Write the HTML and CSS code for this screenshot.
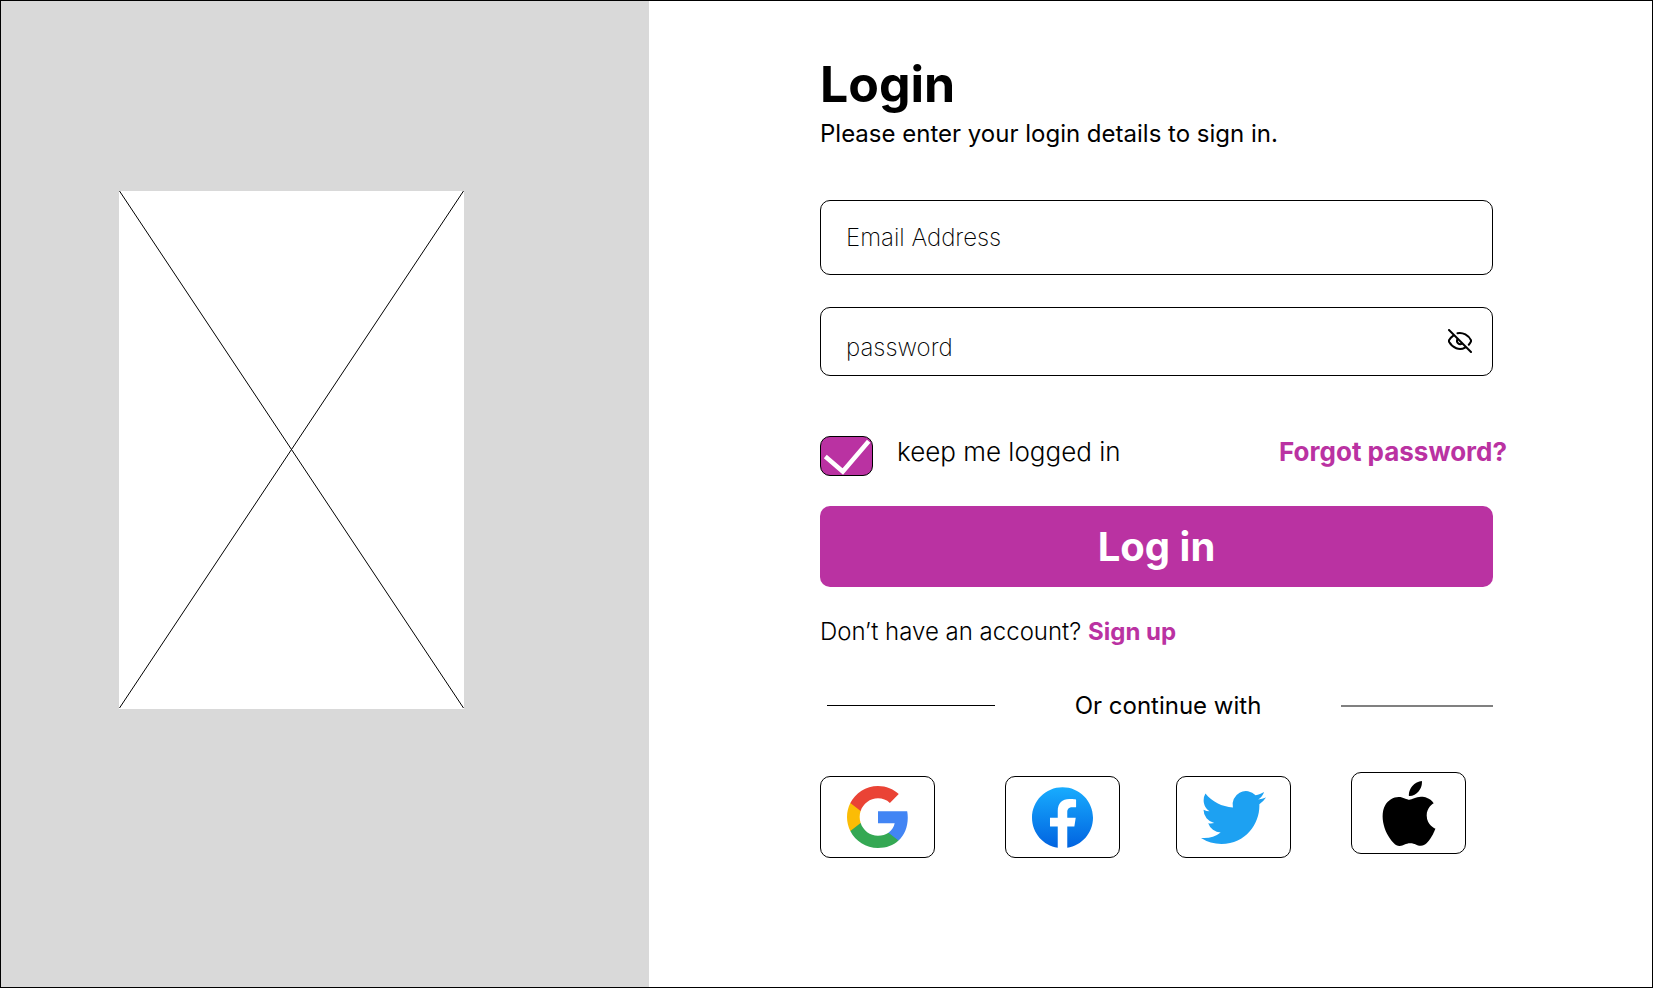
FILE: index.html
```html
<!DOCTYPE html>
<html lang="en">
<head>
<meta charset="utf-8">
<meta name="viewport" content="width=device-width, initial-scale=1">
<title>Login</title>
<link rel="stylesheet" href="styles.css">
</head>
<body>
<div class="page">
  <aside class="aside">
    <svg class="placeholder" viewBox="0 0 345 518" preserveAspectRatio="none" role="img" aria-label="Image placeholder">
      <rect width="345" height="518" fill="#fff"/>
      <path d="M.5 0 344.5 517M344.5 0 .5 517" stroke="#000" fill="none"/>
    </svg>
  </aside>
  <main class="main">
    <form class="form">
      <h1 class="title">Login</h1>
      <p class="subtitle">Please enter your login details to sign in.</p>
      <input class="field field-email" type="email" placeholder="Email Address" aria-label="Email Address">
      <div class="password">
        <input class="field field-password" type="password" placeholder="password" aria-label="password">
        <button class="reveal" type="button" aria-label="Show password">
          <svg viewBox="0 0 24 24" width="24" height="24" fill="none" stroke="#000" stroke-width="2" stroke-linecap="round" stroke-linejoin="round">
            <path d="M1 1 23 23"/>
            <path d="M9.5 4.2C15 3 20.500 6.500 23 11.200Q23.300 12 22.700 13 21.900 14.500 20.800 15.700"/>
            <path d="M5.300 6.600Q2.500 8.500 1 11.200.7 12 1.200 13C4.500 19 11.500 21.800 17 18.600"/>
            <path d="M9.300 10.300C8 13.500 11 16.200 14 14.700"/>
          </svg>
        </button>
      </div>
      <div class="options">
        <label class="keep">
          <span class="check">
            <input class="check-box" type="checkbox" checked>
            <svg class="check-mark" viewBox="0 0 53 40" aria-hidden="true"><path d="M5.300 20.500 22.800 35.500 48.700 5.300" fill="none" stroke="#fff" stroke-width="4.500"/></svg>
          </span>
          <span>keep me logged in</span>
        </label>
        <a class="link" href="#forgot">Forgot password?</a>
      </div>
      <button class="submit" type="submit">Log in</button>
      <p class="signup">Don’t have an account? <a class="link" href="#signup">Sign up</a></p>
      <div class="divider">
        <span class="rule"></span>
        <span class="divider-text">Or continue with</span>
        <span class="rule rule-gray"></span>
      </div>
      <div class="socials">
        <button class="social" type="button" aria-label="Google">
          <svg width="62" height="62" viewBox="1 1 22 22">
            <path fill="#4285F4" d="M22.560 12.250c0-.78-.07-1.530-.2-2.250H12v4.260h5.920c-.26 1.370-1.040 2.530-2.210 3.310v2.770h3.570c2.080-1.920 3.280-4.740 3.280-8.090z"/>
            <path fill="#34A853" d="M12 23c2.970 0 5.460-.98 7.280-2.660l-3.570-2.770c-.98.66-2.230 1.060-3.710 1.060-2.860 0-5.290-1.930-6.160-4.530H2.180v2.840C3.990 20.530 7.700 23 12 23z"/>
            <path fill="#FBBC05" d="M5.840 14.090c-.22-.66-.35-1.360-.35-2.090s.13-1.430.35-2.090V7.070H2.180C1.430 8.550 1 10.220 1 12s.43 3.450 1.180 4.930l3.660-2.840z"/>
            <path fill="#EA4335" d="M12 5.380c1.620 0 3.060.56 4.210 1.640l3.150-3.150C17.450 2.090 14.970 1 12 1 7.700 1 3.990 3.470 2.180 7.070l3.660 2.840c.87-2.600 3.300-4.530 6.160-4.530z"/>
          </svg>
        </button>
        <button class="social" type="button" aria-label="Facebook">
          <svg width="61" height="61" viewBox="0 0 24 24">
            <defs><linearGradient id="fb" x1="0" y1="0" x2="0" y2="1"><stop offset="0" stop-color="#18ACFE"/><stop offset="1" stop-color="#0163E0"/></linearGradient></defs>
            <path fill="url(#fb)" d="M24 12.073c0-6.627-5.373-12-12-12s-12 5.373-12 12c0 5.990 4.388 10.954 10.125 11.854v-8.385H7.078v-3.470h3.047V9.430c0-3.007 1.792-4.669 4.533-4.669 1.312 0 2.686.235 2.686.235v2.953H15.830c-1.491 0-1.956.925-1.956 1.874v2.250h3.328l-.532 3.470h-2.796v8.385C19.612 23.027 24 18.062 24 12.073z"/>
          </svg>
        </button>
        <button class="social" type="button" aria-label="Twitter">
          <svg width="65" height="65" viewBox="0 0 24 24">
            <path fill="#1DA1F2" d="M23.953 4.570a10 10 0 01-2.825.775 4.958 4.958 0 002.163-2.723c-.951.555-2.005.959-3.127 1.184a4.920 4.920 0 00-8.384 4.482C7.690 8.095 4.067 6.130 1.640 3.162a4.822 4.822 0 00-.666 2.475c0 1.710.87 3.213 2.188 4.096a4.904 4.904 0 01-2.228-.616v.06a4.923 4.923 0 003.946 4.827 4.996 4.996 0 01-2.212.085 4.936 4.936 0 004.604 3.417 9.867 9.867 0 01-6.102 2.105c-.39 0-.779-.023-1.170-.067a13.995 13.995 0 007.557 2.209c9.053 0 13.998-7.496 13.998-13.985 0-.21 0-.42-.015-.63A9.935 9.935 0 0024 4.590z"/>
          </svg>
        </button>
        <button class="social social-apple" type="button" aria-label="Apple">
          <svg width="54" height="65" viewBox="2 0 20 24">
            <path d="M12.152 6.896c-.948 0-2.415-1.078-3.960-1.040-2.040.027-3.910 1.183-4.961 3.014-2.117 3.675-.546 9.103 1.519 12.090 1.013 1.454 2.208 3.090 3.792 3.039 1.520-.065 2.090-.987 3.935-.987 1.831 0 2.350.987 3.960.948 1.637-.026 2.676-1.480 3.676-2.948 1.156-1.688 1.636-3.325 1.662-3.415-.039-.013-3.182-1.221-3.220-4.857-.026-3.040 2.480-4.494 2.597-4.559-1.429-2.090-3.623-2.324-4.390-2.376-2-.156-3.675 1.090-4.610 1.090zM15.530 3.830c.843-1.012 1.400-2.427 1.245-3.830-1.207.052-2.662.805-3.532 1.818-.78.896-1.454 2.338-1.273 3.714 1.338.104 2.715-.688 3.559-1.701"/>
          </svg>
        </button>
      </div>
    </form>
  </main>
</div>
</body>
</html>
```
FILE: styles.css
```css
*, *::before, *::after { box-sizing: border-box; }

body {
  margin: 0;
  background: #fff;
  color: #000;
  font-family: Inter, "Liberation Sans", sans-serif;
  font-size: 24px;
  line-height: 29px;
}

button, input { font: inherit; color: inherit; }
button { cursor: pointer; padding: 0; }
svg { display: block; }

.page {
  display: grid;
  grid-template-columns: 648fr 1003fr;
  min-height: 100vh;
  border: 1px solid #000;
}

.aside {
  display: grid;
  grid-template-columns: 118fr 345fr 185fr;
  align-items: start;
  padding-top: 190px;
  background: #d9d9d9;
}

.placeholder {
  grid-column: 2;
  width: 100%;
  aspect-ratio: 345 / 518;
}

.main {
  display: grid;
  grid-template-columns: 171fr 673fr 159fr;
  align-items: start;
  padding: 53px 0;
}

.form {
  grid-column: 2;
  display: flex;
  flex-direction: column;
}

.title {
  margin: 0 0 5px;
  font-size: 50px;
  line-height: 60px;
  font-weight: 700;
}

.subtitle { margin: 0 0 52px; }

.field {
  display: block;
  width: 100%;
  padding: 0 25px;
  border: 1px solid #000;
  border-radius: 10px;
  background: #fff;
  font-weight: 200;
}

.field::placeholder { color: #000; opacity: 1; }

.field-email { height: 75px; }

.password {
  position: relative;
  margin: 32px 0 60px;
}

.field-password {
  height: 69px;
  padding: 12px 60px 0 25px;
}

.reveal {
  position: absolute;
  top: 22px;
  right: 21px;
  border: 0;
  background: none;
}

.options {
  display: flex;
  justify-content: space-between;
  align-items: flex-start;
  margin: 0 -14px 30px 0;
  font-size: 26px;
  line-height: 32px;
}

.keep {
  display: flex;
  gap: 24px;
  font-weight: 300;
}

.check { display: grid; }

.check-box, .check-mark {
  grid-area: 1 / 1;
  width: 53px;
  height: 40px;
  margin: 0;
}

.check-box {
  appearance: none;
  border: 1px solid #000;
  border-radius: 10px;
}

.check-box:checked { background: #ba32a2; }
.check-mark { visibility: hidden; pointer-events: none; }
.check-box:checked + .check-mark { visibility: visible; }

.link {
  color: #ba32a2;
  font-weight: 700;
  text-decoration: none;
}

.submit {
  height: 81px;
  margin-bottom: 30px;
  border: 0;
  border-radius: 10px;
  background: #ba32a2;
  color: #fff;
  font-size: 40px;
  line-height: 48px;
  font-weight: 700;
}

.signup {
  margin: 0 0 45px;
  font-weight: 300;
}

.divider {
  display: grid;
  grid-template-columns: 168fr 346fr 152fr;
  align-items: center;
  margin-bottom: 52px;
  padding-left: 7px;
}

.divider-text { text-align: center; }

.rule { border-top: 1px solid #000; }
.rule-gray { border-top: 2px solid #808080; }

.socials {
  display: grid;
  grid-template-columns: 185fr 171fr 175fr 142fr;
  align-items: end;
  height: 86px;
}

.social {
  display: flex;
  align-items: center;
  justify-content: center;
  width: 115px;
  height: 82px;
  border: 1px solid #000;
  border-radius: 10px;
  background: #fff;
}

.social-apple { align-self: start; }
```
